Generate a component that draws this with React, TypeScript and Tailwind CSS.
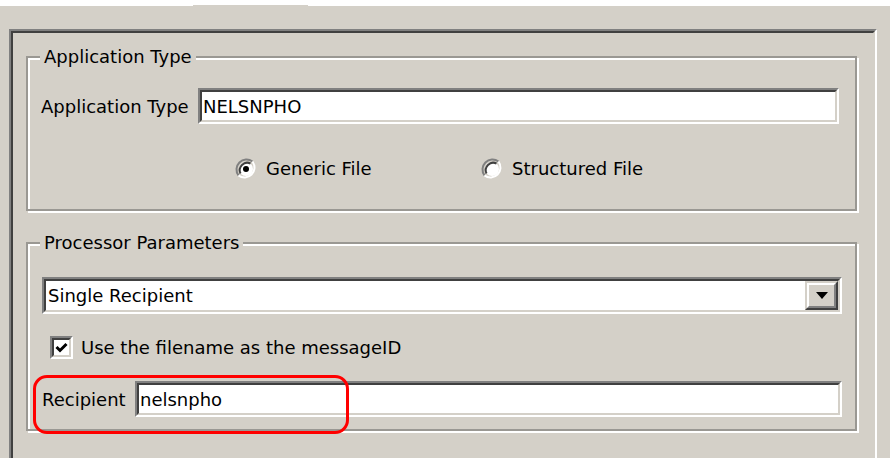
import React from "react";

const font = { fontFamily: '"DejaVu Sans", Verdana, sans-serif' };

// sunken white field, classic style
function Field({ value, className = "" }: { value: string; className?: string }) {
  return (
    <div className={`border-t-2 border-l-2 border-[#808080] border-r-2 border-b-2 border-r-white border-b-white ${className}`}>
      <div className="h-full border-t-2 border-l-2 border-[#404040] border-r-2 border-b-2 border-r-[#d4d0c8] border-b-[#d4d0c8] bg-white flex items-center pl-[1px] text-[18px] text-black">
        {value}
      </div>
    </div>
  );
}

function GroupBox({ title, className = "", children }: { title: string; className?: string; children: React.ReactNode }) {
  return (
    <div className={`relative border-2 border-[#9a9893] shadow-[inset_2px_2px_0_#fff,2px_2px_0_#fff] ${className}`}>
      <span className="absolute left-[12px] -top-[13px] bg-[#d4d0c8] px-[4px] text-[18px] leading-[24px] text-black">
        {title}
      </span>
      {children}
    </div>
  );
}

function Radio({ checked }: { checked?: boolean }) {
  return (
    <svg width="22" height="22" viewBox="0 0 22 22">
      <path d="M3.5 17.5 A10 10 0 0 1 17.5 3.5" fill="none" stroke="#808080" strokeWidth="2" />
      <path d="M17.5 3.5 A10 10 0 0 1 3.5 17.5" fill="none" stroke="#ffffff" strokeWidth="2" />
      <circle cx="11" cy="11" r="7" fill="#fff" />
      <path d="M5.5 15.5 A7.5 7.5 0 0 1 15.5 5.5" fill="none" stroke="#404040" strokeWidth="2" />
      {checked && <circle cx="11" cy="11" r="3" fill="#000" />}
    </svg>
  );
}

function Checkbox() {
  return (
    <div className="w-[23px] h-[23px] border-t-2 border-l-2 border-[#808080] border-r-2 border-b-2 border-r-white border-b-white">
      <div className="w-full h-full border-t-2 border-l-2 border-[#404040] border-r-2 border-b-2 border-r-[#d4d0c8] border-b-[#d4d0c8] bg-white flex items-center justify-center">
        <svg width="13" height="12" viewBox="0 0 13 12">
          <path d="M1.5 5 L5 8.5 L11.5 2" fill="none" stroke="#000" strokeWidth="3" />
        </svg>
      </div>
    </div>
  );
}

export default function App() {
  return (
    <div className="w-[890px] h-[458px] overflow-hidden bg-[#d4d0c8] relative" style={font}>
      {/* top strip with the tab notch */}
      <div className="flex">
        <div className="w-[193px] h-[6px] bg-white" />
        <div className="w-[115px] h-[5px] bg-white" />
        <div className="flex-1 h-[6px] bg-white" />
      </div>

      <div className="ml-[9px] mt-[23px] w-[868px] h-[460px] border-t-2 border-l-2 border-[#808080] border-r-2 border-b-2 border-r-white border-b-white">
        <div className="h-full border-t-2 border-l-2 border-[#404040] border-r-2 border-b-2 border-r-[#d4d0c8] border-b-[#d4d0c8] pl-[13px] pt-[23px]">
          <GroupBox title="Application Type" className="w-[831px] h-[155px]">
            <div className="flex items-center pl-[13px] pt-[30px]">
              <span className="w-[157px] text-[18px] text-black">Application Type</span>
              <Field value="NELSNPHO" className="w-[641px] h-[36px]" />
            </div>
            <div className="flex items-center pt-[31px] text-[18px] text-black">
              <div className="ml-[207px] w-[246px] flex items-center gap-[9px]">
                <Radio checked />
                <span>Generic File</span>
              </div>
              <div className="flex items-center gap-[9px]">
                <Radio />
                <span>Structured File</span>
              </div>
            </div>
          </GroupBox>

          <GroupBox title="Processor Parameters" className="mt-[31px] w-[831px] h-[189px]">
            <div className="pl-[14px] pt-[33px]">
              <div className="flex w-[800px] h-[37px] border-t-2 border-l-2 border-[#808080] border-r-2 border-b-2 border-r-white border-b-white">
                <div className="flex-1 flex border-t-2 border-l-2 border-[#404040] border-r-2 border-b-2 border-r-[#d4d0c8] border-b-[#d4d0c8] bg-white">
                  <div className="flex-1 flex items-center pl-[2px] text-[18px] text-black">Single Recipient</div>
                  <div className="w-[33px] border-t-2 border-l-2 border-[#d4d0c8] border-r-2 border-b-2 border-r-[#404040] border-b-[#404040] bg-[#d4d0c8]">
                    <div className="h-full border-t-2 border-l-2 border-white border-r-2 border-b-2 border-r-[#808080] border-b-[#808080] flex items-center justify-center">
                      <svg width="12" height="7" viewBox="0 0 12 7">
                        <path d="M0 0 H12 L6 7 Z" fill="#000" />
                      </svg>
                    </div>
                  </div>
                </div>
              </div>
              <div className="flex items-center gap-[8px] mt-[20px] ml-[8px] text-[18px] text-black">
                <Checkbox />
                <span>Use the filename as the messageID</span>
              </div>
              <div className="flex items-center mt-[20px]">
                <span className="w-[93px] text-[18px] text-black">Recipient</span>
                <Field value="nelsnpho" className="w-[707px] h-[36px]" />
              </div>
            </div>
          </GroupBox>
        </div>
      </div>

      {/* red callout around the recipient row */}
      <div className="absolute left-[33px] top-[375px] w-[316px] h-[59px] border-[3px] border-[#ff0000] rounded-[14px]" />
    </div>
  );
}
